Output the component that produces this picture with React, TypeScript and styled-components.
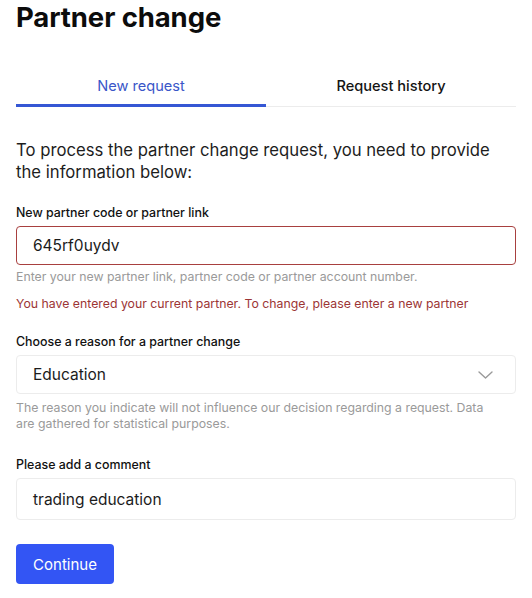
import React, { useState } from 'react';
import styled, { createGlobalStyle } from 'styled-components';

const GlobalStyle = createGlobalStyle`
  * { box-sizing: border-box; }
  body {
    margin: 0;
    background: #ffffff;
    font-family: Inter, "Noto Sans", sans-serif;
    color: #1b1b1b;
  }
`;

const Page = styled.div`
  padding: 0 16px;
  width: 532px;
`;

const Title = styled.h1`
  margin: 0;
  padding-top: 1px;
  font-size: 27.5px;
  line-height: 32px;
  font-weight: 700;
  letter-spacing: -0.1px;
  color: #0c0c0c;
`;

const Tabs = styled.div`
  display: grid;
  grid-template-columns: 1fr 1fr;
  margin-top: 37px;
  border-bottom: 1px solid #ececec;
`;

const Tab = styled.button<{ $active?: boolean }>`
  background: none;
  border: none;
  font-family: inherit;
  font-size: 14.6px;
  font-weight: ${({ $active }) => ($active ? 400 : 500)};
  color: ${({ $active }) => ($active ? '#3a56c8' : '#141414')};
  height: 37px;
  padding: 0 0 2px;
  border-bottom: 3px solid ${({ $active }) => ($active ? '#3557d4' : 'transparent')};
  margin-bottom: -1px;
  cursor: pointer;
`;

const Intro = styled.p`
  margin: 32px 0 0;
  font-size: 16.7px;
  line-height: 22px;
  color: #1d1d1d;
`;

const Field = styled.div<{ $gap: number }>`
  margin-top: ${({ $gap }) => $gap}px;
  display: flex;
  flex-direction: column;
`;

const Label = styled.label`
  font-size: 12.4px;
  font-weight: 500;
  line-height: 18px;
  margin-bottom: 4px;
  color: #111;
`;

const Box = styled.div<{ $error?: boolean; $tall?: boolean }>`
  height: ${({ $tall }) => ($tall ? 42 : 39)}px;
  border: 1px solid ${({ $error }) => ($error ? '#a8403f' : '#ececec')};
  border-radius: 4px;
  display: flex;
  align-items: center;
  justify-content: space-between;
  padding: 0 22px 0 16px;
  font-size: 15.5px;
  color: #1b1b1b;
`;

const Hint = styled.div<{ $error?: boolean; $gap: number }>`
  font-size: 12.3px;
  line-height: 16px;
  padding-right: 14px;
  margin-top: ${({ $gap }) => $gap}px;
  color: ${({ $error }) => ($error ? '#9c3535' : '#9a9a9a')};
`;

const Button = styled.button`
  margin-top: 24px;
  width: 98px;
  height: 40px;
  border: none;
  border-radius: 4px;
  background: #3355f4;
  color: #fff;
  font-family: inherit;
  font-size: 15px;
  cursor: pointer;
`;

const Chevron = () => (
  <svg width="15" height="8" viewBox="0 0 15 8" fill="none">
    <path d="M1 1l6.5 6L14 1" stroke="#9a9a9a" strokeWidth="1.4" strokeLinecap="round" strokeLinejoin="round" />
  </svg>
);

export default function App() {
  const [tab, setTab] = useState(0);
  return (
    <>
      <GlobalStyle />
      <Page>
        <Title>Partner change</Title>
        <Tabs>
          <Tab $active={tab === 0} onClick={() => setTab(0)}>New request</Tab>
          <Tab $active={tab === 1} onClick={() => setTab(1)}>Request history</Tab>
        </Tabs>
        <Intro>To process the partner change request, you need to provide the information below:</Intro>
        <Field $gap={21}>
          <Label>New partner code or partner link</Label>
          <Box $error>645rf0uydv</Box>
          <Hint $gap={4}>Enter your new partner link, partner code or partner account number.</Hint>
          <Hint $gap={11} $error>You have entered your current partner. To change, please enter a new partner</Hint>
        </Field>
        <Field $gap={21}>
          <Label>Choose a reason for a partner change</Label>
          <Box>
            Education
            <Chevron />
          </Box>
          <Hint $gap={6}>The reason you indicate will not influence our decision regarding a request. Data are gathered for statistical purposes.</Hint>
        </Field>
        <Field $gap={24}>
          <Label>Please add a comment</Label>
          <Box $tall>trading education</Box>
        </Field>
        <Button>Continue</Button>
      </Page>
    </>
  );
}
